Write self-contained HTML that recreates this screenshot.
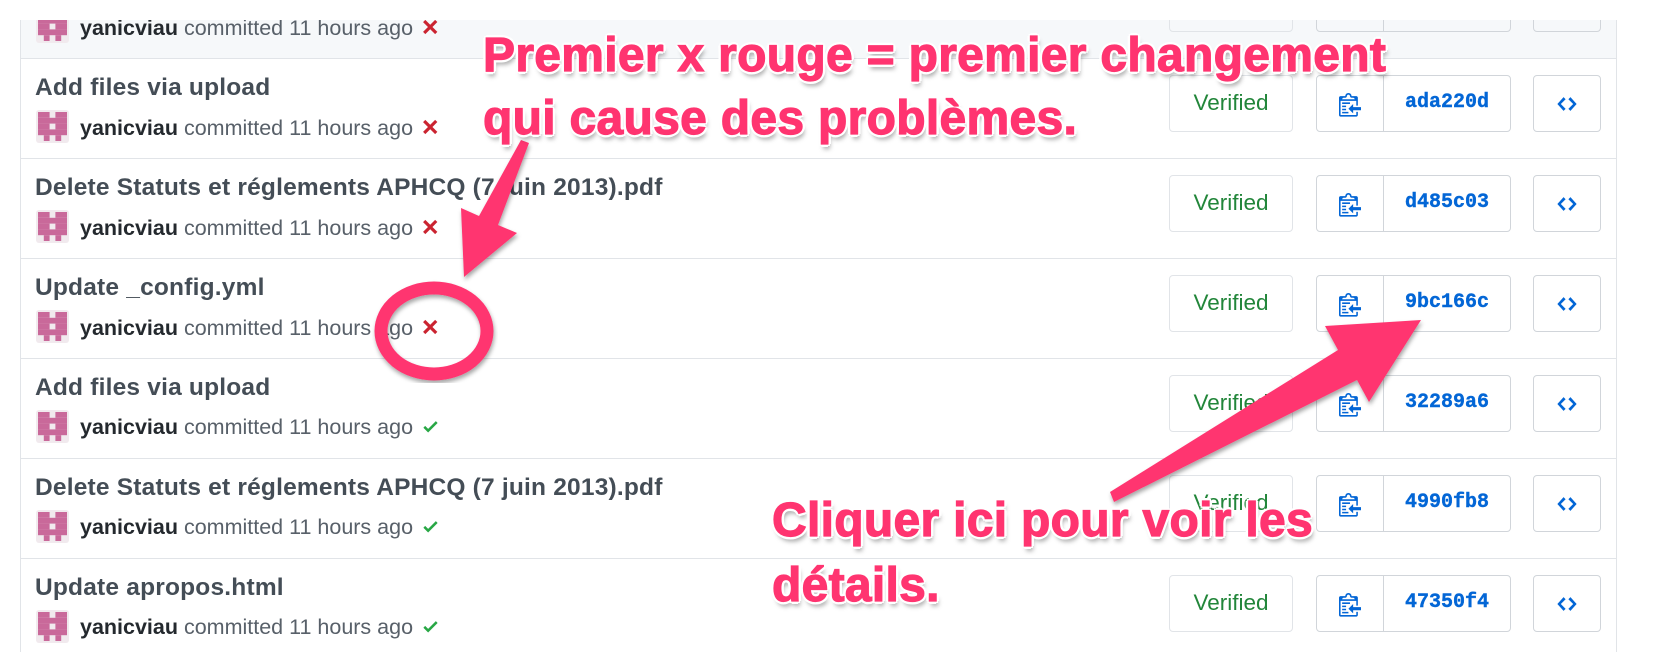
<!DOCTYPE html>
<html><head><meta charset="utf-8"><style>
*{margin:0;padding:0;box-sizing:border-box}
html,body{width:1668px;height:652px;overflow:hidden}
body{background:#fff;font-family:"Liberation Sans",sans-serif;position:relative}
.list{position:absolute;left:20px;top:20px;width:1597px;height:632px;border-left:1px solid #e1e4e8;border-right:1px solid #e1e4e8}
.row{position:absolute;left:20px;width:1597px;height:100px;border-top:1px solid #e1e4e8;border-left:1px solid #e1e4e8;border-right:1px solid #e1e4e8}
.title{position:absolute;left:14px;top:15px;font-size:24.5px;font-weight:bold;color:#444d56;white-space:nowrap;letter-spacing:0.2px}
.av{position:absolute;left:15px;top:51px;width:33px;height:33px;background:#f1eaee;border-radius:3px;padding:2px}
.meta{position:absolute;left:59px;top:56px;font-size:21.5px;color:#586069;white-space:nowrap}
.meta b{color:#24292e}
.x{color:#cb2431;font-size:22px;margin-left:8px;-webkit-text-stroke:1px #cb2431}
.ok{margin-left:8px;vertical-align:-2px}
.ver{position:absolute;left:1148px;top:16px;width:124px;height:57px;border:1.5px solid #e1e4e8;border-radius:4px;color:#22863a;font-size:22.5px;text-align:center;line-height:54px}
.grp{position:absolute;left:1295px;top:16px;width:195px;height:57px;border:1.5px solid #d1d5da;border-radius:4px}
.grp .ic{position:absolute;left:0;top:0;width:67px;height:100%;border-right:1.5px solid #d1d5da;display:flex;align-items:center;justify-content:center}
.grp .sha{position:absolute;left:67px;right:0;top:0;height:100%;text-align:center;line-height:54px;font-family:"Liberation Mono",monospace;font-weight:bold;font-size:20px;color:#0366d6;-webkit-text-stroke:0.4px #0366d6}
.code{position:absolute;left:1512px;top:16px;width:68px;height:57px;border:1.5px solid #d1d5da;border-radius:4px;display:flex;align-items:center;justify-content:center}
.ann{position:absolute;font-weight:bold;font-size:48px;color:#ff3470;white-space:nowrap;-webkit-text-stroke:1.2px #ff3470;letter-spacing:0.3px;
text-shadow:3px 0 0 #fff,-3px 0 0 #fff,0 3px 0 #fff,0 -3px 0 #fff,2px 2px 0 #fff,-2px 2px 0 #fff,2px -2px 0 #fff,-2px -2px 0 #fff,2px 5px 5px rgba(0,0,0,.35)}
</style></head><body>
<div class="list"></div>
<div class="row" style="top:-41px;background:#f6f8fa;border-top:none;height:99px"></div>
<div style="position:absolute;left:0;top:0;width:1668px;height:20px;background:#fff"></div>

<div class="row" style="top:-41px;border:none;border-left:1px solid #e1e4e8;border-right:1px solid #e1e4e8;height:99px;clip-path:inset(61px 0 0 0)">
 <div class="av"><svg width="29" height="29" viewBox="0 0 5 5"><g fill="#c9699a"><rect x="0" y="0" width="2" height="1"/><rect x="3" y="0" width="2" height="1"/><rect x="0" y="1" width="5" height="1"/><rect x="0" y="2" width="2" height="1"/><rect x="3" y="2" width="2" height="1"/><rect x="0" y="3" width="5" height="1"/><rect x="1" y="4" width="1" height="1"/><rect x="3" y="4" width="1" height="1"/></g></svg></div>
 <div class="meta"><b>yanicviau</b> committed 11 hours ago<span class="x">✕</span></div>
 <div class="ver"></div><div class="grp"><div class="ic"></div></div><div class="code"></div>
</div>
<div id="rows"></div>

<svg style="position:absolute;left:0;top:0" width="1668" height="652">
<defs><filter id="sh"><feDropShadow dx="1" dy="3" stdDeviation="2" flood-opacity=".35"/></filter></defs>
<g fill="#ff3470" filter="url(#sh)">
<polygon points="529,143 521,140 479,216 461,208 464,277 517,233 498,225"/>
<polygon points="1114,502 1110,492 1338,350 1325,326 1421,320 1369,402 1357,380"/>
</g>
<ellipse cx="434" cy="331" rx="53" ry="43" fill="none" stroke="#ff3470" stroke-width="13" filter="url(#sh)"/>
</svg>

<div class="ann" style="left:483px;top:28px">Premier x rouge = premier changement</div>
<div class="ann" style="left:483px;top:91px">qui cause des problèmes.</div>
<div class="ann" style="left:772px;top:493px">Cliquer ici pour voir les</div>
<div class="ann" style="left:772px;top:558px">détails.</div>

<script>
var data=[[58,"Add files via upload","ada220d",0],[158,"Delete Statuts et réglements APHCQ (7 juin 2013).pdf","d485c03",0],[258,"Update _config.yml","9bc166c",0],[358,"Add files via upload","32289a6",1],[458,"Delete Statuts et réglements APHCQ (7 juin 2013).pdf","4990fb8",1],[558,"Update apropos.html","47350f4",1]];
var clip='<svg width="22" height="26" viewBox="0 0 14 16"><path fill="#0366d6" d="M2 13h4v1H2v-1zm5-6H2v1h5V7zm2 3V8l-3 3 3 3v-2h5v-2H9zM4.5 9H2v1h2.5V9zM2 12h2.5v-1H2v1zm9 1h1v2c-.02.28-.11.52-.3.7-.19.18-.42.28-.7.3H1c-.55 0-1-.45-1-1V4c0-.55.45-1 1-1h3c0-1.11.89-2 2-2 1.11 0 2 .89 2 2h3c.55 0 1 .45 1 1v5h-1V6H1v9h10v-2zM2 5h8c0-.55-.45-1-1-1H8c-.55 0-1-.45-1-1s-.45-1-1-1-1 .45-1 1-.45 1-1 1H3c-.55 0-1 .45-1 1z"/></svg>';
var code='<svg width="20" height="22" viewBox="0 0 14 16"><path fill="#0366d6" d="M9.5 3L8 4.5 11.5 8 8 11.5 9.5 13 14 8 9.5 3zm-5 0L0 8l4.5 5L6 11.5 2.5 8 6 4.5 4.5 3z"/></svg>';
var av=document.querySelector('.av').outerHTML;
var h='';
data.forEach(function(d){
 var st=d[3]?'<svg class="ok" width="19" height="19" viewBox="0 0 12 16"><path fill="#28a745" d="M12 5l-8 8-4-4 1.5-1.5L4 10l6.5-6.5L12 5z"/></svg>':'<span class="x">✕</span>';
 h+='<div class="row" style="top:'+d[0]+'px"><div class="title">'+d[1]+'</div>'+av+'<div class="meta"><b>yanicviau</b> committed 11 hours ago'+st+'</div><div class="ver">Verified</div><div class="grp"><div class="ic">'+clip+'</div><div class="sha">'+d[2]+'</div></div><div class="code">'+code+'</div></div>';
});
document.getElementById('rows').innerHTML=h;
</script>
</body></html>
